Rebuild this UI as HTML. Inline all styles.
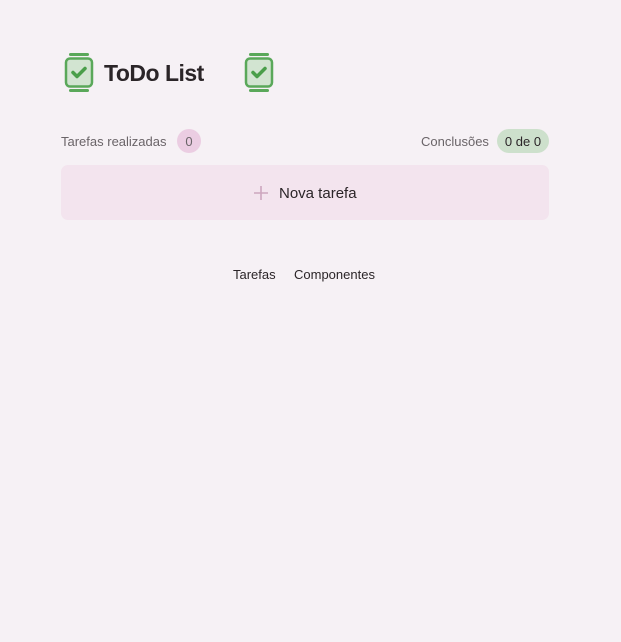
<!DOCTYPE html>
<html><head><meta charset="utf-8"><style>
*{margin:0;padding:0;box-sizing:border-box}
body{width:621px;height:642px;background:#f6f1f5;font-family:"Liberation Sans",sans-serif;position:relative;overflow:hidden}
.abs{position:absolute}
.t{font-size:13px;color:#6a6468}
</style></head><body>
<svg class="abs" style="left:63px;top:52px" width="32" height="42" viewBox="0 0 32 42">
<rect x="6" y="1" width="20" height="3" rx="1.5" fill="#5aa85a"/>
<rect x="3" y="6.5" width="26" height="28" rx="4" fill="#d2e4d1" stroke="#5aa85a" stroke-width="2.5"/>
<path d="M10 20.5l4 4 8-8" fill="none" stroke="#4a9e4a" stroke-width="3.5" stroke-linecap="round" stroke-linejoin="round"/>
<rect x="6" y="37" width="20" height="3" rx="1.5" fill="#5aa85a"/>
</svg>
<div class="abs" style="left:104px;top:60px;font-size:23px;font-weight:bold;color:#2b2528;letter-spacing:-0.5px">ToDo List</div>
<svg class="abs" style="left:243px;top:52px" width="32" height="42" viewBox="0 0 32 42">
<rect x="6" y="1" width="20" height="3" rx="1.5" fill="#5aa85a"/>
<rect x="3" y="6.5" width="26" height="28" rx="4" fill="#d2e4d1" stroke="#5aa85a" stroke-width="2.5"/>
<path d="M10 20.5l4 4 8-8" fill="none" stroke="#4a9e4a" stroke-width="3.5" stroke-linecap="round" stroke-linejoin="round"/>
<rect x="6" y="37" width="20" height="3" rx="1.5" fill="#5aa85a"/>
</svg>
<div class="abs t" style="left:61px;top:134px">Tarefas realizadas</div>
<div class="abs" style="left:177px;top:129px;width:24px;height:24px;border-radius:12px;background:#ebcde2;font-size:13px;color:#6a6468;text-align:center;line-height:25px">0</div>
<div class="abs t" style="left:421px;top:134px">Conclusões</div>
<div class="abs" style="left:497px;top:129px;width:52px;height:24px;border-radius:12px;background:#cde0cc;font-size:13px;color:#2b2528;text-align:center;line-height:25px">0 de 0</div>
<div class="abs" style="left:61px;top:165px;width:488px;height:55px;border-radius:7px;background:#f3e4ee"></div>
<svg class="abs" style="left:253px;top:185px" width="16" height="16"><path d="M8 1v14M1 8h14" stroke="#cda6be" stroke-width="1.6"/></svg>
<div class="abs" style="left:279px;top:185px;font-size:15px;color:#2b2528">Nova tarefa</div>
<div class="abs" style="left:233px;top:267px;font-size:13px;color:#2b2528">Tarefas</div>
<div class="abs" style="left:294px;top:267px;font-size:13px;color:#2b2528">Componentes</div>
</body></html>
